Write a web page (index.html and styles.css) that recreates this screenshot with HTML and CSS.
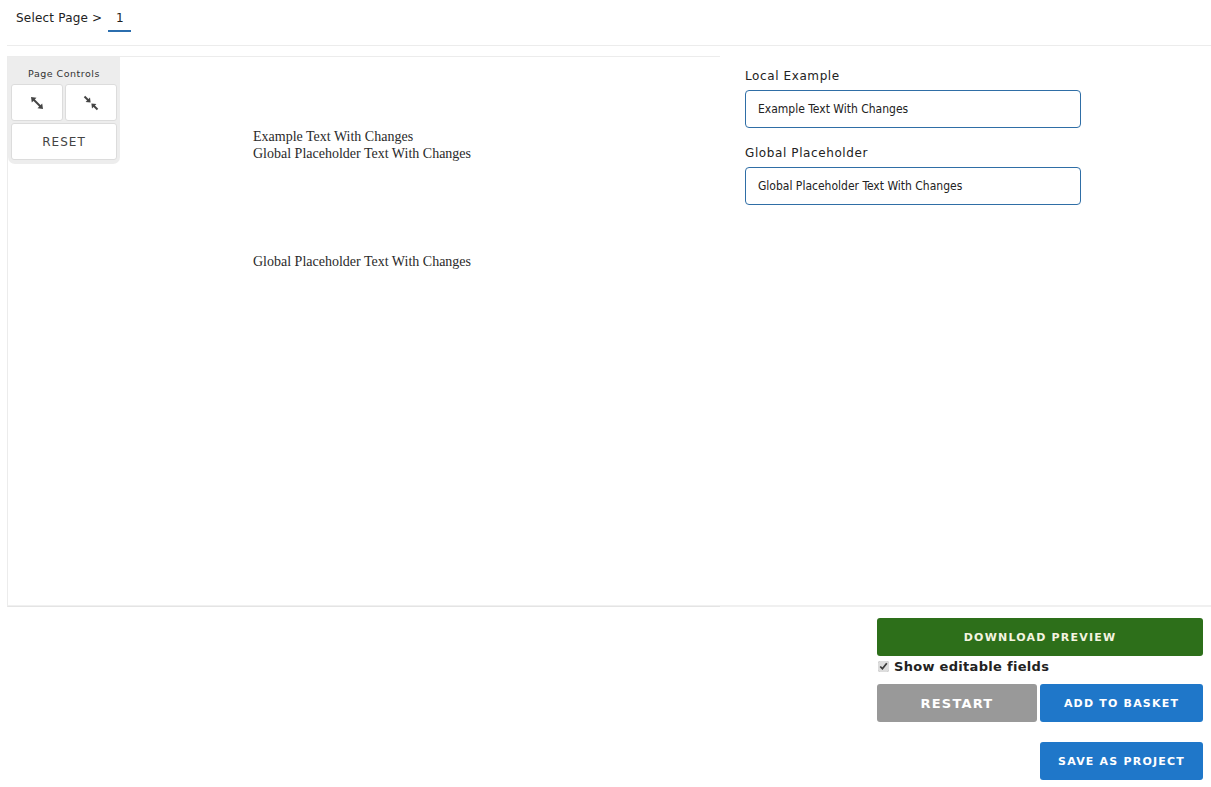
FILE: index.html
```html
<!DOCTYPE html>
<html lang="en">
<head>
    <meta charset="UTF-8">
    <title>Template Editor</title>
    <link rel="stylesheet" href="styles.css">
</head>
<body>
    <div class="page-nav">
        <span class="nav-label">Select Page &gt;</span>
        <span class="page-tab">1</span>
    </div>

    <div class="editor">
        <div class="preview">
            <div class="page-controls">
                <div class="controls-title">Page Controls</div>
                <div class="controls-row">
                    <button class="ctrl-btn" title="Zoom in">
                        <svg width="16" height="16" viewBox="0 0 16 16">
                            <path d="M4 4 L12 12" stroke="#444" stroke-width="2"/>
                            <path d="M2 2 L7.5 2.8 L2.8 7.5 Z" fill="#444"/>
                            <path d="M14 14 L8.5 13.2 L13.2 8.5 Z" fill="#444"/>
                        </svg>
                    </button>
                    <button class="ctrl-btn" title="Zoom out">
                        <svg width="16" height="16" viewBox="0 0 16 16">
                            <path d="M1.5 1.5 L5.5 5.5" stroke="#444" stroke-width="2"/>
                            <path d="M14.5 14.5 L10.5 10.5" stroke="#444" stroke-width="2"/>
                            <path d="M7.6 7.6 L2.6 7 L7 2.6 Z" fill="#444"/>
                            <path d="M8.4 8.4 L13.4 9 L9 13.4 Z" fill="#444"/>
                        </svg>
                    </button>
                </div>
                <button class="ctrl-btn reset-btn">RESET</button>
            </div>

            <div class="doc-text">
                <div>Example Text With Changes</div>
                <div>Global Placeholder Text With Changes</div>
                <div class="doc-gap">Global Placeholder Text With Changes</div>
            </div>
        </div>

        <div class="fields">
            <div class="field">
                <label for="local-example">Local Example</label>
                <input type="text" id="local-example" value="Example Text With Changes">
            </div>
            <div class="field">
                <label for="global-placeholder">Global Placeholder</label>
                <input type="text" id="global-placeholder" value="Global Placeholder Text With Changes">
            </div>
        </div>
    </div>

    <div class="actions">
        <button class="btn btn-green btn-wide">DOWNLOAD PREVIEW</button>
        <label class="show-fields"><input type="checkbox" checked> Show editable fields</label>
        <div class="btn-row">
            <button class="btn btn-grey">RESTART</button>
            <button class="btn btn-blue">ADD TO BASKET</button>
        </div>
        <div class="btn-row btn-row-end">
            <button class="btn btn-blue">SAVE AS PROJECT</button>
        </div>
    </div>
</body>
</html>
```

FILE: styles.css
```css
body {
    font-family: "DejaVu Sans", Verdana, sans-serif;
    margin: 0;
    padding: 0;
    background-color: white;
    color: #222;
}

.page-nav {
    margin-left: 7px;
    height: 46px;
    border-bottom: 1px solid #ececec;
    display: flex;
    align-items: flex-start;
    box-sizing: border-box;
    font-size: 12px;
    letter-spacing: 0.2px;
}

.nav-label {
    margin: 11px 0 0 9px;
}

.page-tab {
    margin: 11px 0 0 6px;
    width: 23px;
    height: 21px;
    text-align: center;
    border-bottom: 2px solid #2b6eae;
    box-sizing: border-box;
}

.editor {
    display: flex;
    margin-top: 10px;
    margin-left: 7px;
    border-bottom: 2px solid #f0f0f0;
}

.preview {
    position: relative;
    width: 713px;
    height: 551px;
    border-top: 1px solid #ececec;
    border-left: 1px solid #ececec;
    border-bottom: 1px solid #e4e4e4;
    margin-bottom: -2px;
    box-sizing: border-box;
}

.page-controls {
    position: absolute;
    top: 0;
    left: 0;
    width: 112px;
    height: 107px;
    background-color: #ededed;
    border-radius: 0 0 7px 7px;
    padding: 11px 3px 0 3px;
    box-sizing: border-box;
}

.controls-title {
    font-size: 9.5px;
    text-align: center;
    color: #333;
    letter-spacing: 0.5px;
    margin-bottom: 5px;
}

.controls-row {
    display: flex;
    gap: 2px;
    margin-bottom: 2px;
}

.ctrl-btn {
    background-color: white;
    border: 1px solid #dcdcdc;
    border-radius: 3px;
    height: 37px;
    flex: 1;
    display: flex;
    align-items: center;
    justify-content: center;
    padding: 0;
    font-family: "DejaVu Sans", Verdana, sans-serif;
}

.reset-btn {
    width: 100%;
    font-size: 12px;
    letter-spacing: 1px;
    color: #444;
}

.doc-text {
    font-family: "Liberation Serif", "Times New Roman", serif;
    font-size: 14px;
    line-height: 17px;
    color: #2a2a2a;
    padding: 71px 0 0 245px;
}

.doc-gap {
    margin-top: 91px;
}

.fields {
    padding: 13px 0 0 25px;
}

.field {
    margin-bottom: 18px;
}

.field label {
    display: block;
    font-size: 12px;
    letter-spacing: 0.6px;
    color: #222;
    margin-bottom: 7px;
}

.field input {
    width: 336px;
    height: 38px;
    box-sizing: border-box;
    border: 1px solid #2f6ea6;
    border-radius: 4px;
    padding: 0 12px;
    font-family: "DejaVu Sans Condensed", Tahoma, sans-serif;
    font-size: 12px;
    color: #222;
}

.actions {
    width: 326px;
    margin: 11px 0 0 877px;
}

.btn {
    height: 38px;
    border: none;
    border-radius: 3px;
    color: white;
    font-family: "DejaVu Sans", Verdana, sans-serif;
    font-weight: bold;
    font-size: 11px;
    letter-spacing: 1.2px;
    cursor: pointer;
}

.btn-wide {
    width: 100%;
    color: #f4f4e0;
}

.btn-green {
    background-color: #2d6f1a;
}

.btn-grey {
    background-color: #999;
    width: 160px;
    font-size: 13px;
}

.btn-blue {
    background-color: #1f77c9;
    width: 163px;
}

.show-fields {
    display: flex;
    align-items: center;
    font-size: 13px;
    font-weight: bold;
    letter-spacing: 0.3px;
    margin: 2px 0 10px 0;
    height: 16px;
}

.show-fields input {
    margin: 0 5px 0 1px;
    width: 11px;
    height: 11px;
    accent-color: #dddddd;
}

.btn-row {
    display: flex;
    gap: 3px;
    margin-bottom: 20px;
}

.btn-row-end {
    justify-content: flex-end;
}
```
